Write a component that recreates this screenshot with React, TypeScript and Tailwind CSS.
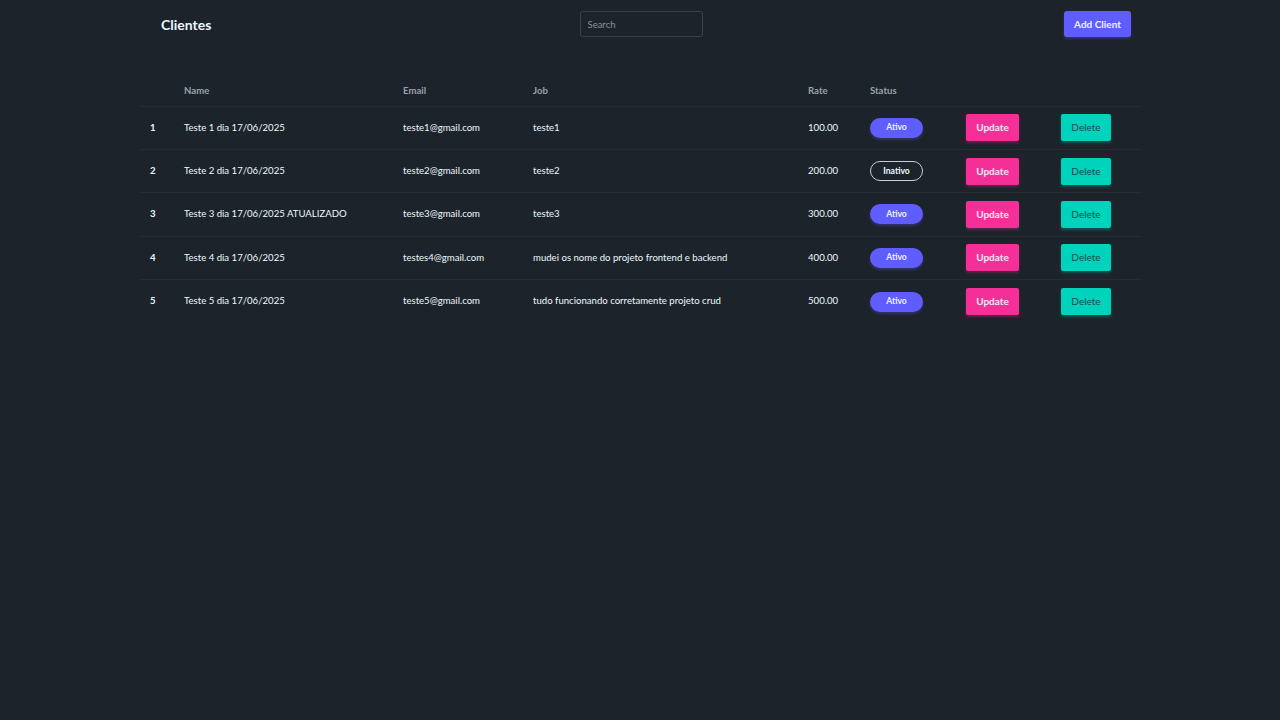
import React from "react";

type Client = {
  id: number;
  name: string;
  email: string;
  job: string;
  rate: string;
  active: boolean;
};

const clients: Client[] = [
  { id: 1, name: "Teste 1 dia 17/06/2025", email: "teste1@gmail.com", job: "teste1", rate: "100.00", active: true },
  { id: 2, name: "Teste 2 dia 17/06/2025", email: "teste2@gmail.com", job: "teste2", rate: "200.00", active: false },
  { id: 3, name: "Teste 3 dia 17/06/2025 ATUALIZADO", email: "teste3@gmail.com", job: "teste3", rate: "300.00", active: true },
  { id: 4, name: "Teste 4 dia 17/06/2025", email: "testes4@gmail.com", job: "mudei os nome do projeto frontend e backend", rate: "400.00", active: true },
  { id: 5, name: "Teste 5 dia 17/06/2025", email: "teste5@gmail.com", job: "tudo funcionando corretamente projeto crud", rate: "500.00", active: true },
];

const NavBar = () => (
  <div className="grid grid-cols-[1fr_auto_1fr] items-center h-[48px] px-[16px]">
    <h1 className="pl-[5px] text-[14px] font-bold text-[#ecf9ff]">Clientes</h1>
    <input
      placeholder="Search"
      className="w-[123px] h-[26px] rounded-[3px] border border-[#3a4048] bg-transparent px-[7px] text-[9.5px] text-[#ecf9ff] placeholder:text-[#8a919b] outline-none"
    />
    <div className="flex justify-end mr-[-5px]">
      <button className="h-[26px] w-[67px] rounded-[3px] bg-[#605dff] text-[10px] font-bold text-[#edf1fe] shadow-[0_2px_3px_rgba(96,93,255,0.3)]">
        Add Client
      </button>
    </div>
  </div>
);

const TableList = () => (
  <table className="mt-[28px] w-full table-fixed border-collapse text-left text-[9.6px] text-[#ecf9ff]">
    <colgroup>
      <col className="w-[34px]" />
      <col className="w-[219px]" />
      <col className="w-[130px]" />
      <col className="w-[275px]" />
      <col className="w-[62px]" />
      <col className="w-[96px]" />
      <col className="w-[95px]" />
      <col />
    </colgroup>
    <thead>
      <tr className="h-[30px] border-b border-[#262c33] text-[#9aa1ab]">
        <th className="pl-[10px]"></th>
        <th className="pl-[10px] font-bold">Name</th>
        <th className="pl-[10px] font-bold">Email</th>
        <th className="pl-[10px] font-bold">Job</th>
        <th className="pl-[10px] font-bold">Rate</th>
        <th className="pl-[10px] font-bold">Status</th>
        <th></th>
        <th></th>
      </tr>
    </thead>
    <tbody>
      {clients.map((c, i) => (
        <tr
          key={c.id}
          className={i < clients.length - 1 ? "h-[43.4px] border-b border-[#262c33]" : "h-[43.4px]"}
        >
          <th className="pl-[10px] font-bold">{c.id}</th>
          <td className="pl-[10px]">{c.name}</td>
          <td className="pl-[10px]">{c.email}</td>
          <td className="pl-[10px]">{c.job}</td>
          <td className="pl-[10px]">{c.rate}</td>
          <td className="pl-[10px]">
            {c.active ? (
              <button className="h-[20px] w-[53px] rounded-full bg-[#605dff] text-[8.6px] font-bold text-[#edf1fe] shadow-[0_2px_3px_rgba(96,93,255,0.3)]">
                Ativo
              </button>
            ) : (
              <button className="h-[20px] w-[53px] rounded-full border border-[#c9ced4] text-[8.6px] font-bold text-[#ecf9ff]">
                Inativo
              </button>
            )}
          </td>
          <td className="pl-[10px]">
            <button className="h-[27px] w-[53px] rounded-[2px] bg-[#f43098] text-[10px] font-bold text-[#fde8f3] shadow-[0_2px_3px_rgba(244,48,152,0.3)]">
              Update
            </button>
          </td>
          <td className="pl-[10px]">
            <button className="h-[27px] w-[50px] rounded-[2px] bg-[#00d3bb] text-[10px] text-[#084d49] shadow-[0_2px_3px_rgba(0,211,187,0.3)]">
              Delete
            </button>
          </td>
        </tr>
      ))}
    </tbody>
  </table>
);

export default function App() {
  return (
    <div
      className="min-h-screen bg-[#1d232a] pl-[140px]"
      style={{ fontFamily: 'Lato, "Open Sans", sans-serif' }}
    >
      <div className="w-[1002px]">
        <NavBar />
        <TableList />
      </div>
    </div>
  );
}
